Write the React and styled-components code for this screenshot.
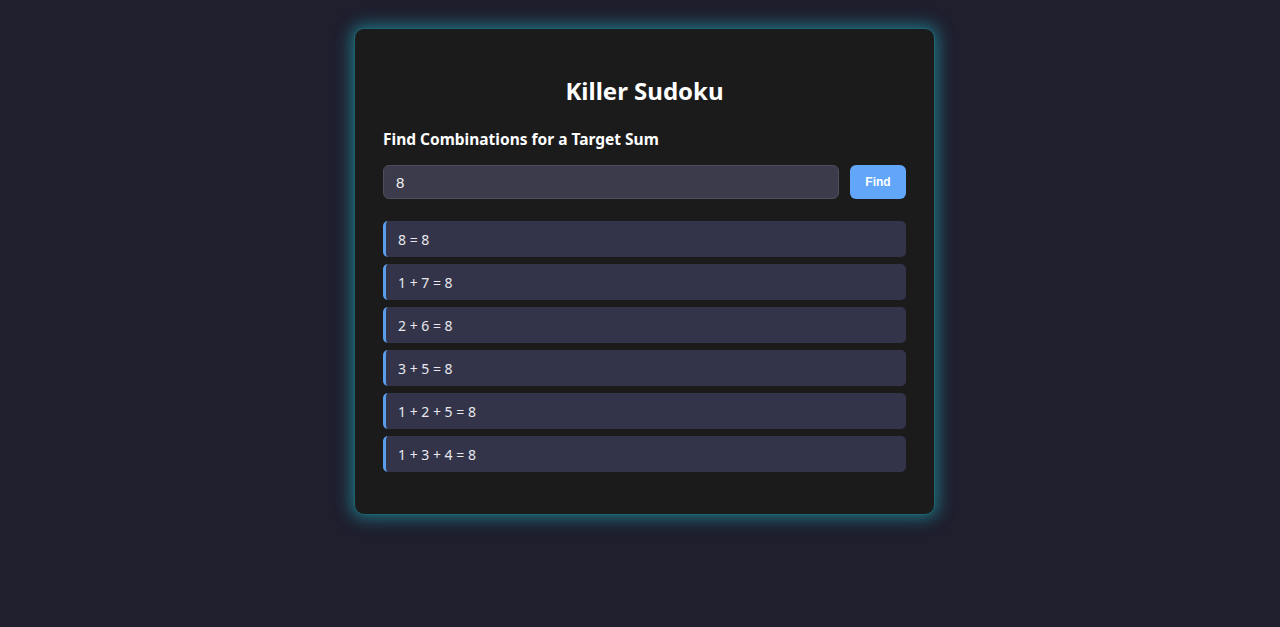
import styled, { createGlobalStyle } from 'styled-components';

const GlobalStyle = createGlobalStyle`
  html, body {
    margin: 0;
    padding: 0;
    background: #1f1f2e;
    font-family: "Noto Sans", "Open Sans", sans-serif;
    color: #ffffff;
  }
`;

const Page = styled.div`
  display: flex;
  justify-content: center;
  padding: 28px 0 0 9px;
  min-height: 627px;
  box-sizing: border-box;
`;

const Card = styled.div`
  width: 581px;
  box-sizing: border-box;
  padding: 46px 28px 42px;
  background: #1b1b1b;
  border: 1px solid #1c6570;
  border-radius: 10px;
  box-shadow: 0 0 16px 3px rgba(32, 168, 184, 0.6);
  align-self: flex-start;
`;

const Title = styled.h1`
  margin: 0 0 21px;
  text-align: center;
  font-size: 24px;
  font-weight: 700;
  line-height: 32px;
`;

const Subtitle = styled.h2`
  margin: 0 0 15px;
  font-size: 15.5px;
  font-weight: 700;
  line-height: 22px;
`;

const SearchRow = styled.form`
  display: flex;
  gap: 11px;
  margin-bottom: 22px;
`;

const Input = styled.input`
  flex: 1;
  height: 34px;
  box-sizing: border-box;
  padding: 0 12px;
  background: #3c3b4b;
  border: 1px solid #4e4d5c;
  border-radius: 6px;
  color: #f2f2f2;
  font-family: "Liberation Sans", Arial, sans-serif;
  font-size: 15px;
  outline: none;
`;

const Button = styled.button`
  width: 56px;
  height: 34px;
  border: none;
  border-radius: 6px;
  background: #62a6fa;
  color: #ffffff;
  font-family: "Liberation Sans", Arial, sans-serif;
  font-size: 12px;
  font-weight: 700;
  cursor: pointer;
`;

const List = styled.div`
  display: flex;
  flex-direction: column;
  gap: 7px;
`;

const Item = styled.div`
  height: 36px;
  display: flex;
  align-items: center;
  box-sizing: border-box;
  padding-left: 12px;
  background: #33344a;
  border-left: 3px solid #5a9eeb;
  border-radius: 5px;
  font-size: 14px;
  color: #e8e8ee;
`;

const combos = [
  [8],
  [1, 7],
  [2, 6],
  [3, 5],
  [1, 2, 5],
  [1, 3, 4],
];

export default function App() {
  return (
    <>
      <GlobalStyle />
      <Page>
        <Card>
          <Title>Killer Sudoku</Title>
          <Subtitle>Find Combinations for a Target Sum</Subtitle>
          <SearchRow onSubmit={(e) => e.preventDefault()}>
            <Input defaultValue="8" />
            <Button type="submit">Find</Button>
          </SearchRow>
          <List>
            {combos.map((c) => (
              <Item key={c.join('-')}>{c.join(' + ')} = 8</Item>
            ))}
          </List>
        </Card>
      </Page>
    </>
  );
}
